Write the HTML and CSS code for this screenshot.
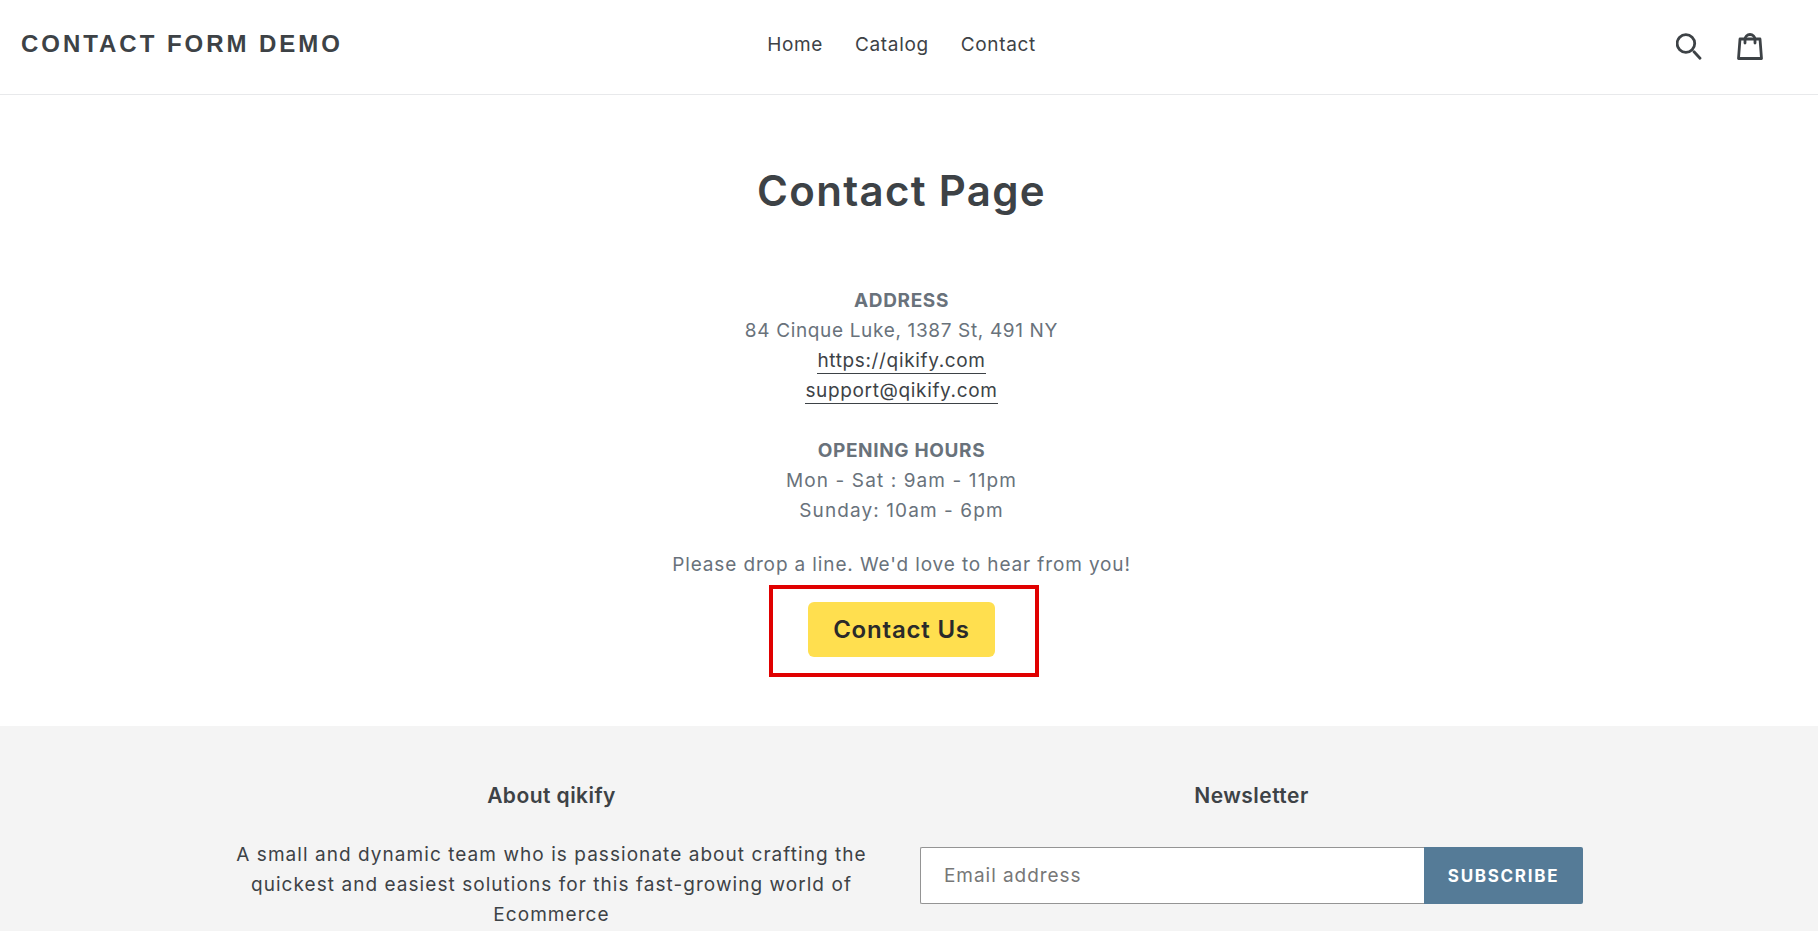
FILE: index.html
```html
<!DOCTYPE html>
<html lang="en">
<head>
  <meta charset="UTF-8">
  <meta name="viewport" content="width=device-width, initial-scale=1.0">
  <title>Contact Page</title>
  <link rel="stylesheet" href="styles.css">
</head>
<body>
  <header class="site-header">
    <a href="#" class="logo">CONTACT FORM DEMO</a>
    <nav class="site-nav">
      <a href="#">Home</a>
      <a href="#">Catalog</a>
      <a href="#">Contact</a>
    </nav>
    <div class="header-icons">
      <a href="#" class="icon-link" aria-label="Search">
        <svg width="26" height="27" viewBox="0 0 26 27" fill="none" stroke="#3d4246" stroke-width="2.8" stroke-linecap="round">
          <circle cx="9.900" cy="10.500" r="8.800"/>
          <path d="M18 18.700l6 6.600"/>
        </svg>
      </a>
      <a href="#" class="icon-link" aria-label="Cart">
        <svg width="26" height="28" viewBox="0 0 26 28" fill="none" stroke="#3d4246" stroke-width="2.8" stroke-linejoin="round" stroke-linecap="round">
          <path d="M3 6h20l1.500 19.500h-23z"/>
          <path d="M8 10V6.500a5 5 0 0 1 10 0V10"/>
        </svg>
      </a>
    </div>
  </header>

  <main class="contact-page">
    <h1>Contact Page</h1>
    <div class="contact-info">
      <p>
        <strong>ADDRESS</strong><br>
        84 Cinque Luke, 1387 St, 491 NY<br>
        <a href="#">https://qikify.com</a><br>
        <a href="#">support@qikify.com</a>
      </p>
      <p class="hours">
        <strong>OPENING HOURS</strong><br>
        Mon - Sat : 9am - 11pm<br>
        Sunday: 10am - 6pm
      </p>
      <p class="drop-line">Please drop a line. We'd love to hear from you!</p>
      <div class="button-wrap">
        <button type="button" class="contact-btn">Contact Us</button>
        <span class="highlight-box"></span>
      </div>
    </div>
  </main>

  <footer class="site-footer">
    <div class="footer-col">
      <h4>About qikify</h4>
      <p>A small and dynamic team who is passionate about crafting the quickest and easiest solutions for this fast-growing world of Ecommerce</p>
    </div>
    <div class="footer-col">
      <h4>Newsletter</h4>
      <form class="newsletter">
        <input type="email" placeholder="Email address">
        <button type="button">SUBSCRIBE</button>
      </form>
    </div>
  </footer>
</body>
</html>
```

FILE: styles.css
```css
html, body {
  height: 100%;
  overflow: hidden;
}

body {
  display: flex;
  flex-direction: column;
  margin: 0;
  font-family: Inter, "Open Sans", sans-serif;
  font-size: 19px;
  letter-spacing: 0.65px;
  line-height: 30px;
  color: #69727b;
  background: white;
}

a {
  color: #3d4246;
  text-decoration: none;
}

.site-header {
  display: grid;
  grid-template-columns: 1fr auto 1fr;
  align-items: center;
  flex-shrink: 0;
  height: 94px;
  padding: 0 55px 0 21px;
  border-bottom: 1px solid #e8e9eb;
}

.logo {
  font-family: "Liberation Sans", Arial, sans-serif;
  font-size: 24px;
  font-weight: bold;
  letter-spacing: 2.96px;
  margin-top: -6px;
}

.site-nav {
  display: flex;
  gap: 32px;
  margin-top: -4px;
  margin-left: 19px;
}

.header-icons {
  display: flex;
  justify-content: flex-end;
  gap: 35px;
  margin-top: -1px;
}

.icon-link {
  display: flex;
}

.contact-page {
  padding: 70px 15px 0 0;
  text-align: center;
}

h1 {
  margin: 0 0 69px;
  font-size: 42px;
  line-height: 52px;
  font-weight: 600;
  letter-spacing: 1.3px;
  color: #3d4246;
}

.contact-info p {
  margin: 0 0 30px;
}

.contact-info strong {
  font-weight: 700;
  letter-spacing: 0.65px;
}

.contact-info a {
  padding-bottom: 1px;
  border-bottom: 1px solid #3d4246;
}

.contact-info .hours {
  letter-spacing: 1.1px;
}

.contact-info .drop-line {
  margin: -6px 0 22px;
  letter-spacing: 0.87px;
}

.button-wrap {
  position: relative;
  width: 187px;
  margin: 0 auto;
}

.contact-btn {
  display: block;
  width: 187px;
  height: 55px;
  border: none;
  border-radius: 6px;
  background: #ffdf4f;
  color: #2a2a2a;
  font-family: inherit;
  font-size: 24px;
  font-weight: 600;
  letter-spacing: 0.8px;
}

.highlight-box {
  position: absolute;
  top: -17px;
  left: -39px;
  width: 262px;
  height: 84px;
  border: 4px solid #e00000;
}

.site-footer {
  display: grid;
  grid-template-columns: 663px 663px;
  gap: 37px;
  justify-content: center;
  flex: 1;
  margin-top: 69px;
  padding: 55px 15px 0 0;
  background: #f4f4f4;
  color: #3d4246;
  text-align: center;
}

.footer-col h4 {
  margin: 0 0 29px;
  font-size: 21px;
  font-weight: 600;
  letter-spacing: 0.45px;
}

.footer-col p {
  margin: 0;
  padding: 0 5px;
  letter-spacing: 1.05px;
}

.newsletter {
  display: flex;
  height: 57px;
  margin-top: 36px;
}

.newsletter input {
  flex: 1;
  min-width: 0;
  box-sizing: border-box;
  padding: 0 23px;
  border: 1px solid #949494;
  border-right: none;
  border-radius: 2px 0 0 2px;
  background: white;
  font-family: inherit;
  font-size: 19px;
  letter-spacing: 0.95px;
  outline: none;
}

.newsletter input::placeholder {
  color: #777;
}

.newsletter button {
  width: 159px;
  border: none;
  border-radius: 0 2px 2px 0;
  background: #557b97;
  color: white;
  font-family: inherit;
  font-size: 17px;
  font-weight: 700;
  letter-spacing: 1.7px;
}
```
